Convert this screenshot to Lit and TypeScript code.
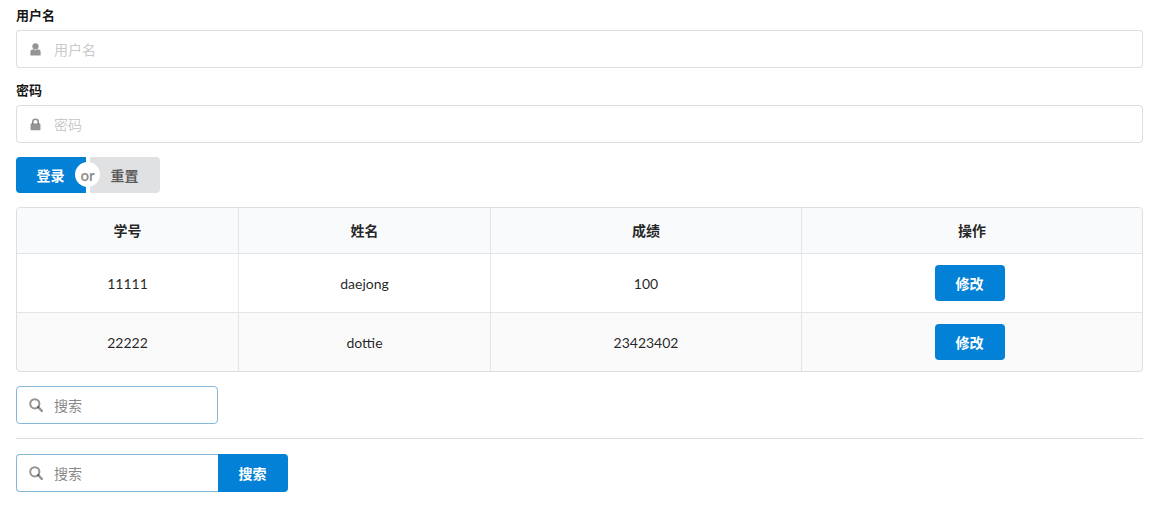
import { LitElement, html, css, svg } from "lit";
import { customElement } from "lit/decorators.js";

const user = svg`<svg class="ic" viewBox="0 0 12 14" width="11" height="13"><circle cx="6" cy="3.6" r="3.4" fill="currentColor"/><path d="M0.4 13.6V9.6C0.4 7.9 1.8 6.7 3.4 6.7C4.1 7.4 5 7.8 6 7.8C7 7.8 7.9 7.4 8.6 6.7C10.2 6.7 11.6 7.9 11.6 9.6V13.6Z" fill="currentColor"/></svg>`;
const lock = svg`<svg class="ic" viewBox="0 0 12 14" width="11" height="13"><path d="M3 6.5V4.2C3 2.5 4.3 1.3 6 1.3C7.7 1.3 9 2.5 9 4.2V6.5" fill="none" stroke="currentColor" stroke-width="1.8"/><rect x="0.6" y="6" width="10.8" height="7.4" rx="1" fill="currentColor"/></svg>`;
const search = svg`<svg class="ic" viewBox="0 0 14 14" width="14" height="14"><circle cx="5.8" cy="5.8" r="4.6" fill="none" stroke="currentColor" stroke-width="2"/><path d="M9.2 9.2L12.8 12.8" stroke="currentColor" stroke-width="2.4" stroke-linecap="round"/></svg>`;

@customElement("app-root")
export class AppRoot extends LitElement {
  static styles = css`
    :host {
      display: block;
      padding: 7px 23px 0 16px;
      font-family: Lato, "Noto Sans CJK SC", sans-serif;
      font-size: 14px;
      color: rgba(0, 0, 0, 0.87);
    }
    .field { margin-bottom: 14px; }
    label {
      display: block;
      font-size: 13px;
      font-weight: 700;
      line-height: 17px;
      height: 19px;
      margin-bottom: 4px;
      color: rgba(0, 0, 0, 0.92);
    }
    .input {
      display: flex;
      align-items: center;
      box-sizing: border-box;
      height: 38px;
      border: 1px solid rgba(34, 36, 38, 0.15);
      border-radius: 4px;
      background: #fff;
    }
    .input.focus { border-color: #85b7d9; }
    .ico-box {
      flex: none;
      width: 37px;
      display: flex;
      justify-content: center;
      color: rgba(0, 0, 0, 0.42);
    }
    .ic { display: block; }
    input {
      flex: 1;
      min-width: 0;
      border: 0;
      outline: 0;
      padding: 0;
      background: transparent;
      font: inherit;
      color: inherit;
    }
    input::placeholder { color: rgba(191, 191, 191, 0.87); }
    .focus input::placeholder { color: rgba(115, 115, 115, 0.87); }
    .btns { display: flex; height: 36px; margin-bottom: 14px; width: 144px; }
    .btn {
      border: 0;
      padding: 0 0 1px;
      font: inherit;
      font-weight: 700;
      display: flex;
      align-items: center;
      justify-content: center;
    }
    .primary { background: #0281d6; color: #fff; }
    .login { width: 70px; border-radius: 4px 0 0 4px; padding-right: 1px; }
    .gap { width: 4px; position: relative; }
    .or {
      position: absolute;
      left: -11px;
      top: 5px;
      width: 25px;
      height: 25px;
      border-radius: 50%;
      background: #fff;
      color: rgba(0, 0, 0, 0.46);
      font-weight: 700;
      font-size: 15px;
      line-height: 27px;
      text-align: center;
    }
    .reset {
      width: 70px;
      background: #e0e1e2;
      color: rgba(0, 0, 0, 0.6);
      border-radius: 0 4px 4px 0;
      padding-right: 1px;
    }
    .tbl {
      box-sizing: border-box;
      height: 165px;
      border: 1px solid rgba(34, 36, 38, 0.15);
      border-radius: 4px;
      margin-bottom: 14px;
      overflow: hidden;
    }
    table {
      width: 100%;
      height: 100%;
      table-layout: fixed;
      border-collapse: separate;
      border-spacing: 0;
    }
    th, td {
      text-align: center;
      padding: 0;
      border-left: 1px solid rgba(34, 36, 38, 0.1);
    }
    th:first-child, td:first-child { border-left: 0; }
    th {
      height: 44px;
      padding-bottom: 1px;
      background: #f9fafb;
      font-weight: 700;
      border-bottom: 1px solid rgba(34, 36, 38, 0.1);
    }
    td { height: 58px; }
    tr.alt td {
      background: rgba(0, 0, 0, 0.02);
      border-top: 1px solid rgba(34, 36, 38, 0.1);
    }
    .edit {
      width: 70px;
      height: 36px;
      border-radius: 4px;
      margin: 0 auto;
      position: relative;
      left: -2px;
      top: 0;
      padding-right: 1px;
    }
    .s1 { width: 202px; }
    hr {
      border: 0;
      border-top: 1px solid rgba(34, 36, 38, 0.15);
      margin: 14px 0 15px;
    }
    .combo { display: flex; }
    .combo .input { width: 202px; border-radius: 4px 0 0 4px; border-right: 0; }
    .go { width: 70px; height: 38px; border-radius: 0 4px 4px 0; padding-right: 1px; }
  `;

  render() {
    return html`
      <div class="field">
        <label>用户名</label>
        <div class="input"><span class="ico-box">${user}</span><input placeholder="用户名" /></div>
      </div>
      <div class="field">
        <label>密码</label>
        <div class="input"><span class="ico-box">${lock}</span><input placeholder="密码" type="text" /></div>
      </div>
      <div class="btns">
        <button class="btn primary login">登录</button>
        <div class="gap"><span class="or">or</span></div>
        <button class="btn reset">重置</button>
      </div>
      <div class="tbl">
        <table>
          <colgroup>
            <col style="width:221px" /><col style="width:252px" /><col style="width:311px" /><col />
          </colgroup>
          <thead><tr><th>学号</th><th>姓名</th><th>成绩</th><th>操作</th></tr></thead>
          <tbody>
            <tr>
              <td>11111</td><td>daejong</td><td>100</td>
              <td><button class="btn primary edit">修改</button></td>
            </tr>
            <tr class="alt">
              <td>22222</td><td>dottie</td><td>23423402</td>
              <td><button class="btn primary edit">修改</button></td>
            </tr>
          </tbody>
        </table>
      </div>
      <div class="input focus s1"><span class="ico-box">${search}</span><input placeholder="搜索" /></div>
      <hr />
      <div class="combo">
        <div class="input focus"><span class="ico-box">${search}</span><input placeholder="搜索" /></div>
        <button class="btn primary go">搜索</button>
      </div>
    `;
  }
}
